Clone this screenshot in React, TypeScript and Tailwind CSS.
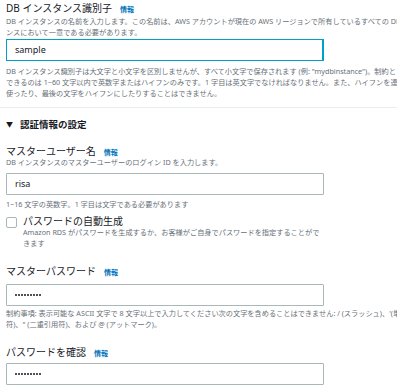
const font = { fontFamily: '"Noto Sans", "Noto Sans CJK JP", sans-serif' };

function Info() {
  return <span className="ml-[8px] text-[7px] font-bold text-[#0073bb]">情報</span>;
}

function Label({ text, className = "" }: { text: string; className?: string }) {
  return (
    <div className={"h-[12px] text-[10px] leading-[12px] text-[#16191f] whitespace-nowrap " + className}>
      {text}
      <Info />
    </div>
  );
}

function Line({ text }: { text: string }) {
  return <div className="h-[11px] text-[7.2px] leading-[11px] text-[#687078] whitespace-nowrap">{text}</div>;
}

function Dots() {
  return (
    <div className="flex gap-[1px]">
      {Array.from({ length: 9 }).map((_, i) => (
        <span key={i} className="w-[2px] h-[2px] rounded-full bg-[#16191f]" />
      ))}
    </div>
  );
}

function Field({ value, focused = false, secret = false, className = "" }: { value: string; focused?: boolean; secret?: boolean; className?: string }) {
  return (
    <div
      className={
        "w-[318px] h-[22px] flex items-center px-[8px] bg-white " +
        (focused ? "border border-r-2 border-[#00a1c9]" : "border border-[#aab7b8] rounded-[1px]") +
        " " +
        className
      }
    >
      {secret ? <Dots /> : <span className="text-[9px] text-[#16191f]">{value}</span>}
    </div>
  );
}

export default function App() {
  return (
    <div className="w-[397px] h-[389px] overflow-hidden bg-white" style={font}>
      <div className="w-[760px] pt-[2px]">
        <div className="pl-[6px]">
          <Label text="DB インスタンス識別子" />
          <div className="mt-[2px]">
            <Line text="DB インスタンスの名前を入力します。この名前は、AWS アカウントが現在の AWS リージョンで所有しているすべての DB インスタ" />
            <Line text="ンスにおいて一意である必要があります。" />
          </div>
          <Field value="sample" focused className="mt-[1px]" />
          <div className="mt-[5px]">
            <Line text='DB インスタンス識別子は大文字と小文字を区別しませんが、すべて小文字で保存されます (例: "mydbinstance")。制約として、指定' />
            <Line text="できるのは 1~60 文字以内で英数字またはハイフンのみです。1 字目は英文字でなければなりません。また、ハイフンを連続で" />
            <Line text="使ったり、最後の文字をハイフンにしたりすることはできません。" />
          </div>
        </div>

        <div className="mt-[8px] h-px bg-[#eaeded]" />

        <div className="pl-[6px]">
          <div className="mt-[11px] h-[12px] flex items-center text-[9.5px] leading-[12px] font-bold text-[#16191f] whitespace-nowrap">
            <span className="text-[7px] w-[14px]">▼</span>
            認証情報の設定
          </div>

          <Label text="マスターユーザー名" className="mt-[14px]" />
          <Line text="DB インスタンスのマスターユーザーのログイン ID を入力します。" />
          <Field value="risa" className="mt-[5px]" />
          <div className="mt-[4px]">
            <Line text="1~16 文字の英数字。1 字目は文字である必要があります" />
          </div>

          <div className="mt-[5px] flex gap-[6px]">
            <div className="mt-[2px] w-[11px] h-[11px] border border-[#aab7b8] rounded-[2px] bg-white" />
            <div>
              <div className="h-[12px] text-[10px] leading-[12px] text-[#16191f] whitespace-nowrap">パスワードの自動生成</div>
              <Line text="Amazon RDS がパスワードを生成するか、お客様がご自身でパスワードを指定することがで" />
              <Line text="きます" />
            </div>
          </div>

          <Label text="マスターパスワード" className="mt-[16px]" />
          <Field value="" secret className="mt-[7px]" />
          <div className="mt-[2px]">
            <Line text="制約事項: 表示可能な ASCII 文字で 8 文字以上で入力してください次の文字を含めることはできません: / (スラッシュ)、'(単一引用" />
            <Line text='符)、" (二重引用符)、および @ (アットマーク)。' />
          </div>

          <Label text="パスワードを確認" className="mt-[16px]" />
          <Field value="" secret className="mt-[5px]" />
        </div>
      </div>
    </div>
  );
}
